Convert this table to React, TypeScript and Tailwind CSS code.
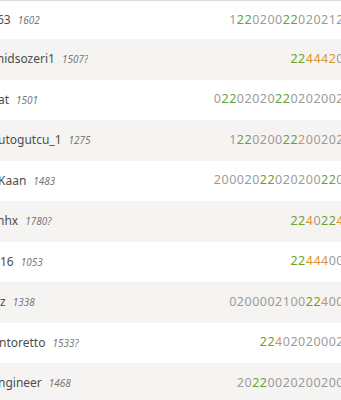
import React from "react";

type Row = { name: string; cut: number; rating: string; sheet: string };

const rows: Row[] = [
  { name: "63", cut: 3, rating: "1602", sheet: "1[22]0200[22]020212" },
  { name: "midsozeri1", cut: 7, rating: "1507?", sheet: "[22]{4442}0" },
  { name: "at", cut: 2, rating: "1501", sheet: "0[22]02020[22]0202002" },
  { name: "utogutcu_1", cut: 2, rating: "1275", sheet: "1[22]0200[22]{2}00202" },
  { name: "Kaan", cut: 2, rating: "1483", sheet: "200020[22]020200[22]0" },
  { name: "hhx", cut: 3, rating: "1780?", sheet: "[22]{4}0[22]{4}" },
  { name: "16", cut: 0, rating: "1053", sheet: "[22]{444}00" },
  { name: "z", cut: 0, rating: "1338", sheet: "0200002100[22]{4}00" },
  { name: "ntoretto", cut: 1, rating: "1533?", sheet: "[22]{4}02020002" },
  { name: "ngineer", cut: 2, rating: "1468", sheet: "20[22]0020200200" },
];

function Sheet({ s }: { s: string }) {
  const out: React.ReactNode[] = [];
  let mode: "n" | "g" | "o" = "n";
  s.split("").forEach((ch, i) => {
    if (ch === "[") mode = "g";
    else if (ch === "{") mode = "o";
    else if (ch === "]" || ch === "}") mode = "n";
    else {
      const cls =
        mode === "g"
          ? "text-[#6aa232]"
          : mode === "o"
          ? "text-[#dc952a]"
          : "text-[#9b9b9b]";
      out.push(
        <span key={i} className={cls}>
          {ch}
        </span>
      );
    }
  });
  return <>{out}</>;
}

export default function App() {
  return (
    <div
      className="w-[341px] h-[400px] overflow-hidden bg-white border-t border-[#dcdcdc]"
      style={{ fontFamily: '"Noto Sans", sans-serif' }}
    >
      {rows.map((r, i) => (
        <div
          key={i}
          className={`flex items-center ${i === 0 ? "h-[38px]" : "h-[40.5px]"} ${
            i % 2 === 1 ? "bg-[#f5f4f2]" : "bg-white"
          }`}
        >
          <div className="flex items-baseline gap-[7px] shrink-0 overflow-hidden">
            <span
              className="text-[12px] text-[#4d4d4d] whitespace-nowrap"
              style={{ marginLeft: -r.cut }}
            >
              {r.name}
            </span>
            <span className="text-[10px] italic text-[#787878]">{r.rating}</span>
          </div>
          <div className="flex-1 text-right text-[12.5px] tracking-[0.5px] whitespace-nowrap mr-[-3px]">
            <Sheet s={r.sheet} />
          </div>
        </div>
      ))}
    </div>
  );
}
